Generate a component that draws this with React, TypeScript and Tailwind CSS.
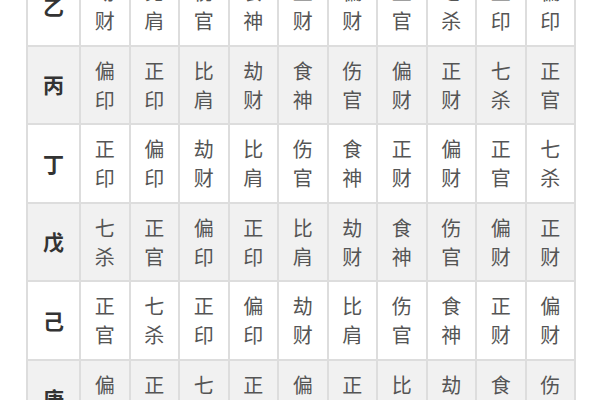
const stems = ["乙", "丙", "丁", "戊", "己", "庚"];

const gods: string[][] = [
  ["劫财", "比肩", "伤官", "食神", "正财", "偏财", "正官", "七杀", "正印", "偏印"],
  ["偏印", "正印", "比肩", "劫财", "食神", "伤官", "偏财", "正财", "七杀", "正官"],
  ["正印", "偏印", "劫财", "比肩", "伤官", "食神", "正财", "偏财", "正官", "七杀"],
  ["七杀", "正官", "偏印", "正印", "比肩", "劫财", "食神", "伤官", "偏财", "正财"],
  ["正官", "七杀", "正印", "偏印", "劫财", "比肩", "伤官", "食神", "正财", "偏财"],
  ["偏财", "正财", "七杀", "正官", "偏印", "正印", "比肩", "劫财", "食神", "伤官"]
];

export default function App() {
  return (
    <div className="h-[400px] w-[600px] overflow-hidden bg-white pl-[26px] font-['Noto_Sans_CJK_SC','Noto_Sans',sans-serif]">
      <table className="-mt-[34px] w-[548px] table-fixed border-collapse">
        <colgroup>
          <col className="w-[53px]" />
          {gods[0].map((_, index) => (
            <col key={index} className="w-[49.5px]" />
          ))}
        </colgroup>
        <tbody>
          {stems.map((stem, rowIndex) => (
            <tr key={stem} className={rowIndex % 2 === 1 ? "h-[78.5px] bg-[#f1f1f1]" : "h-[78.5px] bg-white"}>
              <td className="border-2 border-[#dddddd] text-center text-[21px] font-bold text-[#333333]">{stem}</td>
              {gods[rowIndex].map((god, colIndex) => (
                <td key={colIndex} className="border-2 border-[#dddddd] text-center text-[20px] leading-[29px] text-[#555555]">
                  {god[0]}
                  <br />
                  {god[1]}
                </td>
              ))}
            </tr>
          ))}
        </tbody>
      </table>
    </div>
  );
}
